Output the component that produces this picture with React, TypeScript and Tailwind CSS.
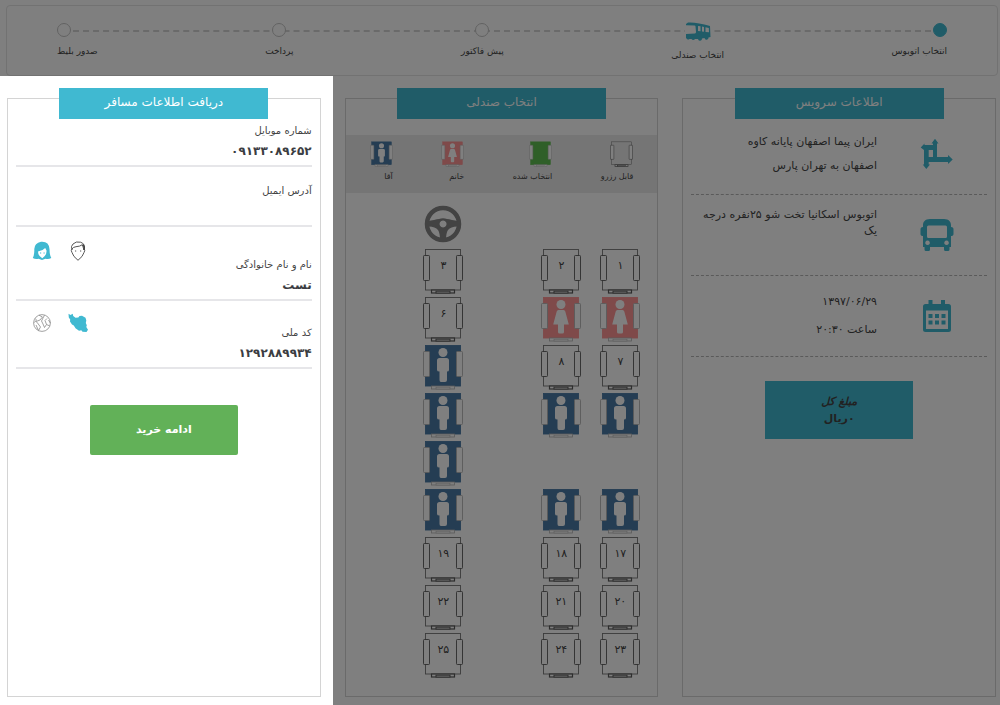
import React, { useState } from 'react';
import clsx from 'clsx';

type SeatStatus = 'free' | 'selected' | 'female' | 'male';

const seatColors: Record<SeatStatus, string> = {
  free: 'none',
  selected: '#5fbf50',
  female: '#ff9494',
  male: '#4a7ba6'
};

const BusSideIcon = () => (
  <svg viewBox="0 0 26 20" className="w-[26px] h-5 bg-white" fill="#40b9d1">
    <path
      fillRule="evenodd"
      d="M1 3 L3 1.5 Q12 1 25 5 L25.500 16 L23.500 16.500 A2 2 0 0 1 19.500 17 L17 17.500 A2 2 0 0 1 13 18 L10 18 A2 2 0 0 1 6.500 18 L4.500 18 A2 2 0 0 1 2 18 L1 17 L1 13 L10 12.500 Q11 12 11 11 L10.500 5.500 Q10.500 4.500 9.500 4.500 L1 4.200 Z M13 5 L13 10 L15.500 10.300 L15.500 5.300 Z M17 5.500 L17 10.500 L19 10.800 L19 6 Z M20.500 6.200 L20.500 10.900 L24 11.300 L23.800 6.900 Z"
    />
  </svg>
);

const RouteIcon = () => (
  <svg viewBox="0 0 34 32" className="w-[34px] h-8" fill="#40b9d1">
    <path
      fillRule="evenodd"
      d="M.7 9.500 L4.500 5.500 V7 H13 V5.500 H11.500 L15 .7 L18.500 5.500 H17 V19 H28 V17 L32.700 21.500 L28 26 V24 H8.700 V26.500 H10 L6.300 31 L2.700 26.500 H4 V12 Z M8.700 12 V19 H13 V12 Z"
    />
  </svg>
);

const BusFrontIcon = () => (
  <svg viewBox="0 0 34 34" className="w-[34px] h-[34px]" fill="#40b9d1">
    <path
      fillRule="evenodd"
      d="M10 1 H24 C29 1 31 4 31 7 V9 C33 9 33.500 10 33.500 11.500 V16 C33.500 17.500 32.500 18 31 18 V29 H29.500 V31.500 Q29.500 33 28 33 H25.500 Q24 33 24 31.500 V29 H10 V31.500 Q10 33 8.500 33 H6 Q4.500 33 4.500 31.500 V29 H3 V18 C1.500 18 .5 17.500 .5 16 V11.500 C.5 10 1 9 3 9 V7 C3 4 5 1 10 1 Z M8.500 7.500 Q7 7.500 7 9 V18.500 Q7 20 8.500 20 H25.500 Q27 20 27 18.500 V9 Q27 7.500 25.500 7.500 Z M7.500 22.500 A2.300 2.300 0 1 0 7.600 22.500 Z M26.500 22.500 A2.300 2.300 0 1 0 26.600 22.500 Z"
    />
  </svg>
);

const CalendarIcon = () => (
  <svg viewBox="0 0 30 34" className="w-[30px] h-[34px]" fill="#40b9d1">
    <path
      fillRule="evenodd"
      d="M6.500 1 H10.500 V5 H19 V1 H23 V5 H26.500 Q29 5 29 7.500 V30.500 Q29 33 26.500 33 H3.500 Q1 33 1 30.500 V7.500 Q1 5 3.500 5 H6.500 Z M4 11.500 V30 H26 V11.500 Z"
    />
    <path d="M6.500 15 h4 v4 h-4z M13 15 h4 v4 h-4z M19.500 15 h4 v4 h-4z M6.500 21.500 h4 v4 h-4z M13 21.500 h4 v4 h-4z M19.500 21.500 h4 v4 h-4z" />
  </svg>
);

const SteeringWheel = () => (
  <svg viewBox="0 0 38 38" className="w-[38px] h-[38px]">
    <circle cx="19" cy="19" r="16" fill="none" stroke="#868686" strokeWidth="4.500" />
    <path
      fill="#868686"
      fillRule="evenodd"
      d="M3 16.500 Q11 14.500 15 14 Q19 12.500 23 14 Q27 14.500 35 16.500 V21.500 Q27 21 24 25 Q22 28 22 35 H16 Q16 28 14 25 Q11 21 3 21.500 Z M19 15.500 A3.500 3.500 0 1 0 19.100 15.500 Z"
    />
  </svg>
);

const WomanIcon = () => (
  <svg viewBox="0 0 20 20" className="w-5 h-5">
    <path
      fill="#40b9d1"
      d="M9 .7 Q17 0 17.500 8 Q17.500 14 19.300 17 Q16.500 18.700 13.500 17.700 L10 19 L6.500 17.700 Q3.500 18.700 .8 17 Q2.500 14 2.300 8 Q2.500 2 9 .7 Z"
    />
    <path fill="#fff" d="M6 10.500 Q10.500 10 13.200 7 L14.500 9.500 Q15 14 10.300 17.300 Q6 15 6 10.500 Z" />
    <path stroke="#40b9d1" strokeWidth="1" d="M8 12 h1.200 M11.500 12 h1.200" />
  </svg>
);

const ManIcon = () => (
  <svg viewBox="0 0 20 20" className="w-5 h-5" fill="none" stroke="#444" strokeWidth=".9">
    <path d="M4 8 Q2.500 9.500 4 11.500 Q5 15.500 10 19.300 Q15 15.500 16 11.500 Q17.500 9.500 16 8" />
    <path d="M4 9 Q2.500 5 5 3 Q8 0 12.500 1.200 Q17.500 2.500 16.300 9 M4 8 Q5 6 8 5.700 Q12 5.500 14.300 3.700 Q15 5.500 16 9" />
    <path strokeWidth="1.500" d="M15 3.500 Q17 6 16 9" />
    <path d="M7 10 h1.200 M12 10 h1.200" />
  </svg>
);

const IranIcon = () => (
  <svg viewBox="0 0 20 20" className="w-5 h-5" fill="#40b9d1">
    <path d="M.5 .8 L2.500 2 L4.700 .8 L5.200 3 L7.500 4.700 L10.300 4.500 L11.500 3 L14 2.800 L17.500 4.800 L18.300 7.500 L17.800 10 L18.800 12.300 L18.300 14 L20 16.700 L18.500 19 L14.500 18.700 L13.300 17.300 L11 17.700 L7.500 15.300 L5.800 12.500 L4 11.500 L2 8.500 L2.200 6.500 L.8 4.500 Z" />
  </svg>
);

const GlobeIcon = () => (
  <svg viewBox="0 0 20 20" className="w-5 h-5" fill="none" stroke="#8a8a8a" strokeWidth=".8">
    <circle cx="10" cy="10" r="8.400" />
    <path d="M3 5.500 L4.500 7 L2.500 9.500 M4 12 L6.500 17.500 L8.500 14 L5.500 10 L4 8.500 L8 7 L10.500 4 L7 2.200 M12.500 2.200 L11 5 L9.500 8 L11 11 L12.500 14.500 L14.500 11.500 L13 7.500 L15 5.500 M14.500 11.500 L17.800 13 M16.500 7 L18.300 10" />
  </svg>
);

const SeatDrawing = ({ status, className }: { status: SeatStatus; className: string }) => {
  const taken = status !== 'free';
  const color = seatColors[status];
  const line = taken ? '#b5b5b5' : '#5a5a5a';
  return (
    <svg viewBox="0 0 40 46" className={className} fill="#fff" stroke={line} strokeWidth=".9">
      <rect x="2.500" y="1.500" width="35" height="40.500" fill={color} stroke={taken ? color : '#777'} />
      <rect x=".5" y="7.500" width="6" height="25" rx=".8" />
      <rect x="33.500" y="7.500" width="6" height="25" rx=".8" />
      <rect x="8.500" y="42" width="23" height="3" strokeWidth={taken ? '.8' : '1.200'} />
      <rect x="13" y="43.200" width="14" height="1.800" strokeWidth={taken ? '.6' : '1'} />
      {(status === 'male' || status === 'female') && (
        <circle cx="20" cy="8.500" r="4.500" fill="#fff" stroke="none" />
      )}
      {status === 'male' && (
        <path stroke="none" d="M16.500 14 H23.500 Q26 14 26 16.500 V26 Q26 27.500 24 27.500 V36 Q24 38 22 38 H18 Q16.500 38 16.500 36 V27.500 Q14 27.500 14 26 V16.500 Q14 14 16.500 14 Z" />
      )}
      {status === 'female' && (
        <path stroke="none" d="M17.500 14 H22.500 Q24 14 24.300 15.500 L27.800 28.500 H23 V36 Q23 37.500 21.500 37.500 H18.500 Q17 37.500 17 36 V28.500 H12.200 L15.700 15.500 Q16 14 17.500 14 Z" />
      )}
    </svg>
  );
};

const steps = [
  { label: 'انتخاب اتوبوس', state: 'done', align: 'items-start' },
  { label: 'انتخاب صندلی', state: 'current', align: 'items-center' },
  { label: 'پیش فاکتور', state: 'next', align: 'items-center' },
  { label: 'پرداخت', state: 'next', align: 'items-center' },
  { label: 'صدور بلیط', state: 'next', align: 'items-end' }
];

const legend: { label: string; status: SeatStatus }[] = [
  { label: 'قابل رزرو', status: 'free' },
  { label: 'انتخاب شده', status: 'selected' },
  { label: 'خانم', status: 'female' },
  { label: 'آقا', status: 'male' }
];

// Each row runs from the window seat on the right to the single seat on the left
const seatRows: ({ no?: string; status: SeatStatus } | null)[][] = [
  [{ no: '۱', status: 'free' }, { no: '۲', status: 'free' }, null, { no: '۳', status: 'free' }],
  [{ status: 'female' }, { status: 'female' }, null, { no: '۶', status: 'free' }],
  [{ no: '۷', status: 'free' }, { no: '۸', status: 'free' }, null, { status: 'male' }],
  [{ status: 'male' }, { status: 'male' }, null, { status: 'male' }],
  [null, null, null, { status: 'male' }],
  [{ status: 'male' }, { status: 'male' }, null, { status: 'male' }],
  [{ no: '۱۷', status: 'free' }, { no: '۱۸', status: 'free' }, null, { no: '۱۹', status: 'free' }],
  [{ no: '۲۰', status: 'free' }, { no: '۲۱', status: 'free' }, null, { no: '۲۲', status: 'free' }],
  [{ no: '۲۳', status: 'free' }, { no: '۲۴', status: 'free' }, null, { no: '۲۵', status: 'free' }]
];

const Stepper = () => (
  <nav className="relative ml-1.5 mr-0.5 mt-[5px] border border-[#e4e4e4] rounded-sm px-[50px] pt-[15px] pb-3">
    <div className="absolute top-6 inset-x-14 border-t-2 border-dashed border-[#d4d4d4]" />
    <ol className="relative flex justify-between">
      {steps.map((step) => (
        <li key={step.label} className={clsx('flex flex-col', step.align)}>
          {step.state === 'current' ? (
            <BusSideIcon />
          ) : (
            <span
              className={clsx(
                'mt-0.5 w-3.5 h-3.5 rounded-full border',
                step.state === 'done' ? 'bg-[#40b9d1] border-[#40b9d1]' : 'bg-white border-[#c4c4c4]'
              )}
            />
          )}
          <span className="mt-1.5 text-[9px] leading-4 whitespace-nowrap">{step.label}</span>
        </li>
      ))}
    </ol>
  </nav>
);

const Panel = ({ title, className, children }: { title: string; className?: string; children: React.ReactNode }) => (
  <section className={clsx('flex flex-col pt-3 pb-2', className)}>
    <h2 className="relative z-10 self-center w-2/3 h-[31px] bg-[#40b9d1] text-white text-xs leading-7 text-center">
      {title}
    </h2>
    <div className="-mt-[21px] flex-1 border border-[#d4d4d4]">{children}</div>
  </section>
);

const ServiceRow = ({ icon, children }: { icon: React.ReactNode; children: React.ReactNode }) => (
  <div className="flex h-[81px] items-center border-b border-dashed border-[#b5b5b5]">
    <div className="w-[100px] flex justify-center">{icon}</div>
    {children}
  </div>
);

const ServicePanel = () => (
  <Panel title="اطلاعات سرویس">
    <div className="px-2 pt-[15px]">
      <ServiceRow icon={<RouteIcon />}>
        <div className="flex-1 pr-2.5 text-[11px] leading-6">
          <p>ایران پیما اصفهان پایانه کاوه</p>
          <p>اصفهان به تهران پارس</p>
        </div>
      </ServiceRow>
      <ServiceRow icon={<BusFrontIcon />}>
        <p className="flex-1 self-start pt-3 pr-2.5 text-[11px] leading-4">
          اتوبوس اسکانیا تخت شو ۲۵نفره درجه یک
        </p>
      </ServiceRow>
      <ServiceRow icon={<CalendarIcon />}>
        <div className="flex-1 pr-2.5 text-[11px] leading-7">
          <p>۱۳۹۷/۰۶/۲۹</p>
          <p>ساعت ۲۰:۳۰</p>
        </div>
      </ServiceRow>
      <div className="mt-6 mx-auto w-1/2 py-3 bg-[#40b9d1] text-center text-[11px] leading-[17px] font-bold">
        <p className="italic">مبلغ کل</p>
        <p>۰ریال</p>
      </div>
    </div>
  </Panel>
);

const SeatPanel = () => (
  <Panel title="انتخاب صندلی">
    <ul className="mt-9 flex justify-between bg-[#ebebeb] px-6 pt-1.5 pb-2">
      {legend.map((item) => (
        <li key={item.status} className="flex flex-col items-start">
          <SeatDrawing status={item.status} className="w-[23px] h-[26px]" />
          <span className="mt-0.5 text-[8px] leading-4 whitespace-nowrap">{item.label}</span>
        </li>
      ))}
    </ul>
    <div className="grid grid-cols-[repeat(4,40px)] gap-x-[19px] pr-[17px] pt-3">
      <div className="col-start-4 flex justify-center pb-[5px]">
        <SteeringWheel />
      </div>
      {seatRows.map((row, r) =>
        row.map((seat, c) =>
          seat ? (
            <button
              key={`${r}-${c}`}
              type="button"
              disabled={seat.status !== 'free'}
              className="relative h-12 text-[11px] leading-9"
            >
              <SeatDrawing status={seat.status} className="absolute inset-x-0 top-0 w-10 h-[46px]" />
              <span className="relative block h-12">{seat.no}</span>
            </button>
          ) : (
            <span key={`${r}-${c}`} className="h-12" />
          )
        )
      )}
    </div>
  </Panel>
);

const inputClass =
  'block w-full h-[26px] pb-1 border-b-2 border-[#e6e6e9] text-xs font-bold text-[#3b3d42] outline-none';

const PassengerPanel = () => {
  const [gender, setGender] = useState('female');
  const [nationality, setNationality] = useState('iran');

  return (
    <Panel title="دریافت اطلاعات مسافر" className="relative z-20 bg-white -mx-3 px-3">
      <form className="px-2 pt-[22px]" onSubmit={(e) => e.preventDefault()}>
        <label htmlFor="mobile" className="block text-[10px] leading-5">شماره موبایل</label>
        <input id="mobile" className={inputClass} defaultValue="۰۹۱۳۳۰۸۹۶۵۲" />

        <label htmlFor="email" className="block mt-3.5 text-[10px] leading-5">آدرس ایمیل</label>
        <input id="email" className={inputClass} />

        <div className="mt-3.5 h-[34px] flex justify-between">
          <label htmlFor="name" className="self-end text-[10px] leading-5">نام و نام خانوادگی</label>
          <div className="flex items-start gap-4 pl-4">
            <button type="button" aria-label="آقا" aria-pressed={gender === 'male'} onClick={() => setGender('male')}>
              <ManIcon />
            </button>
            <button type="button" aria-label="خانم" aria-pressed={gender === 'female'} onClick={() => setGender('female')}>
              <WomanIcon />
            </button>
          </div>
        </div>
        <input id="name" className={inputClass} defaultValue="تست" />

        <div className="mt-3 h-[30px] flex justify-between">
          <label htmlFor="code" className="self-end text-[10px] leading-5">کد ملی</label>
          <div className="flex items-start gap-4 pl-4">
            <button type="button" aria-label="ایرانی" aria-pressed={nationality === 'iran'} onClick={() => setNationality('iran')}>
              <IranIcon />
            </button>
            <button type="button" aria-label="خارجی" aria-pressed={nationality === 'other'} onClick={() => setNationality('other')}>
              <GlobeIcon />
            </button>
          </div>
        </div>
        <input id="code" className={inputClass} defaultValue="۱۲۹۲۸۸۹۹۳۴" />

        <button type="submit" className="block mt-9 mx-auto w-1/2 h-[50px] rounded-xs bg-[#62b158] text-white text-[11px] font-bold">
          ادامه خرید
        </button>
      </form>
    </Panel>
  );
};

const App = () => {
  return (
    <div
      dir="rtl"
      className="relative min-h-screen flex flex-col overflow-hidden bg-white text-[#444] font-['DejaVu_Sans',sans-serif]"
    >
      <Stepper />
      <main className="flex-1 grid grid-cols-3 gap-6 pl-[7px] pr-1">
        <ServicePanel />
        <SeatPanel />
        <PassengerPanel />
      </main>
      {/* Dims everything except the passenger form */}
      <div className="absolute inset-0 z-10 bg-black/50 pointer-events-none" />
    </div>
  );
};

export default App;
